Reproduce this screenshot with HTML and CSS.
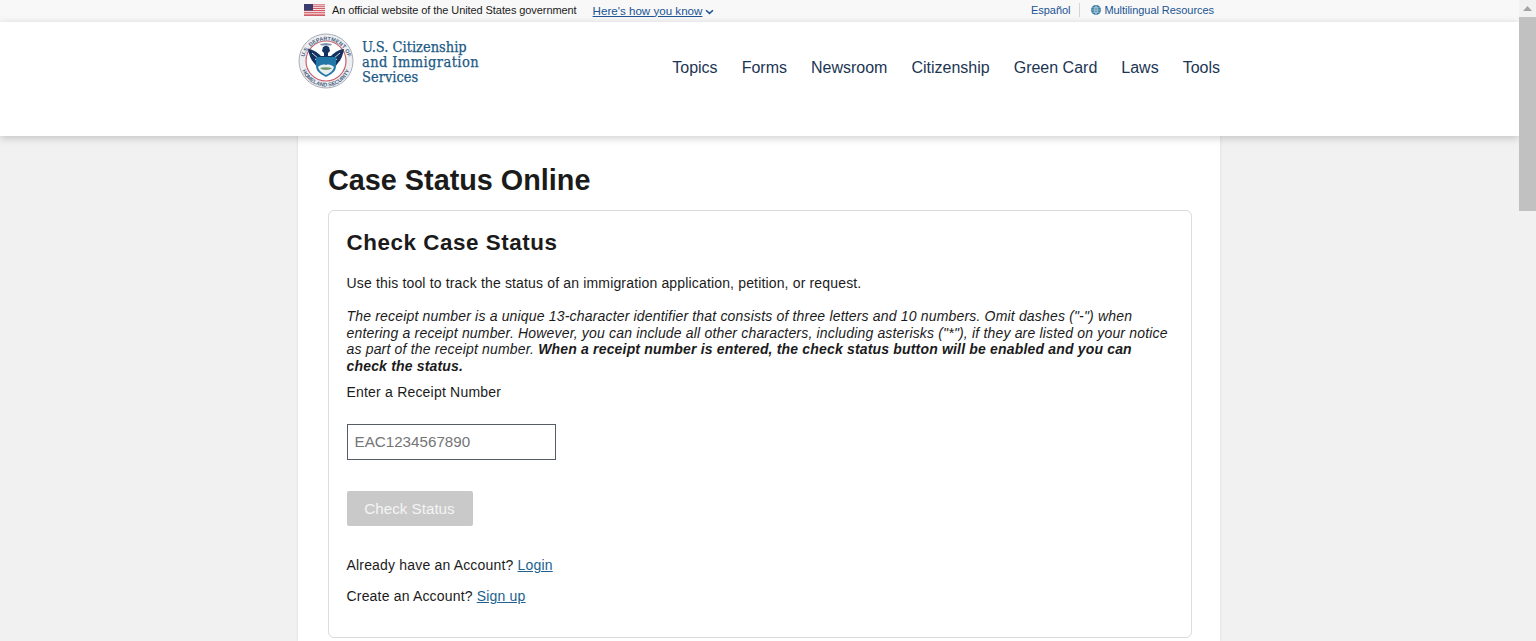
FILE: index.html
```html
<!DOCTYPE html>
<html>
<head>
    <title>Case Status Online</title>
    <link rel="stylesheet" href="styles.css">
</head>
<body>
    <div class="page">
        <div class="banner">
            <div class="banner-inner">
                <svg class="flag" width="21" height="12" viewBox="0 0 21 12">
                    <rect width="21" height="12" fill="#fff"/>
                    <path d="M0 .9h21M0 2.75h21M0 4.6h21M0 6.45h21M0 8.3h21M0 10.15h21M0 11.6h21" stroke="#c8414f" stroke-width=".95"/>
                    <rect width="9" height="6.5" fill="#3c3b6e"/>
                </svg>
                <span class="official">An official website of the United States government</span>
                <a class="know" href="#">Here's how you know</a>
                <svg class="chevron" width="9" height="6" viewBox="0 0 9 6"><path d="M1 1.2l3.5 3.2 3.5-3.2" fill="none" stroke="#205493" stroke-width="1.5"/></svg>
                <div class="lang">
                    <a href="#">Español</a>
                    <span class="lang-sep"></span>
                    <svg width="10" height="10" viewBox="0 0 10 10">
                        <circle cx="5" cy="5" r="4.9" fill="#2a7199"/>
                        <path d="M5 .5v9M.5 5h9M1.2 2.8h7.6M1.2 7.2h7.6M5 .5C2.6 3 2.6 7 5 9.5M5 .5C7.4 3 7.4 7 5 9.5" fill="none" stroke="#d5e6ef" stroke-width=".6"/>
                    </svg>
                    <a href="#">Multilingual Resources</a>
                </div>
            </div>
        </div>

        <header class="header">
            <div class="header-inner">
                <a class="logo" href="#">
                    <svg class="seal" width="56" height="56" viewBox="0 0 56 56">
                        <defs>
                            <path id="sealTop" d="M5.5 30a22.5 22.5 0 0 1 45 0"/>
                            <path id="sealBottom" d="M3 33a25.5 25.5 0 0 0 50 0"/>
                        </defs>
                        <circle cx="28" cy="28" r="27" fill="#eceef1" stroke="#a9adb5" stroke-width="1"/>
                        <circle cx="28" cy="28" r="20" fill="#fff" stroke="#c9606c" stroke-width="1.2"/>
                        <text class="seal-text"><textPath href="#sealTop" startOffset="50%" text-anchor="middle">U.S. DEPARTMENT OF</textPath></text>
                        <text class="seal-text"><textPath href="#sealBottom" startOffset="50%" text-anchor="middle">HOMELAND SECURITY</textPath></text>
                        <!-- wings -->
                        <path d="M10 16c4 0 9 3 13 7h10c4-4 9-7 13-7-1 6-3 11-6 14l-3 4H19l-3-4c-3-3-5-8-6-14z" fill="#14325f"/>
                        <path d="M14 20l7 6M42 20l-7 6M17 26l5 3M39 26l-5 3" stroke="#e8edf2" stroke-width=".9"/>
                        <!-- head -->
                        <path d="M25 14l3-1.5 3 1.5 1 4-2 2v3h-4v-3l-2-2z" fill="#14325f"/>
                        <path d="M22 11l6-1 6 1-1 1.5H23z" fill="#7f93ad"/>
                        <!-- shield -->
                        <path d="M18 24h20v9c0 5-4 8-10 11-6-3-10-6-10-11z" fill="#2377a8"/>
                        <path d="M20 34c2-2 5-3 8-2 3-1 6 0 8 2-1 4-4 6-8 8-4-2-7-4-8-8z" fill="#e9eff1"/>
                        <path d="M22 35c3-1 8-1 12 0-1 1-3 2-6 2s-5-1-6-2z" fill="#6f9a6c"/>
                    </svg>
                    <span class="logo-text">U.S. Citizenship<br><span class="logo-wide">and Immigration</span><br>Services</span>
                </a>
                <nav class="nav">
                    <a href="#">Topics</a>
                    <a href="#">Forms</a>
                    <a href="#">Newsroom</a>
                    <a href="#">Citizenship</a>
                    <a href="#">Green Card</a>
                    <a href="#">Laws</a>
                    <a href="#">Tools</a>
                </nav>
            </div>
        </header>

        <main class="main">
            <h1>Case Status Online</h1>
            <section class="card">
                <h2>Check Case Status</h2>
                <p class="intro">Use this tool to track the status of an immigration application, petition, or request.</p>
                <p class="note">The receipt number is a unique 13-character identifier that consists of three letters and 10 numbers. Omit dashes ("-") when entering a receipt number. However, you can include all other characters, including asterisks ("*"), if they are listed on your notice as part of the receipt number. <b>When a receipt number is entered, the check status button will be enabled and you can check the status.</b></p>
                <label for="receipt">Enter a Receipt Number</label>
                <input type="text" id="receipt" placeholder="EAC1234567890">
                <button type="button" disabled>Check Status</button>
                <p class="account">Already have an Account? <a href="#">Login</a></p>
                <p class="account">Create an Account? <a href="#">Sign up</a></p>
            </section>
        </main>
    </div>

    <div class="scrollbar">
        <div class="scroll-up"><svg width="9" height="5" viewBox="0 0 9 5"><path d="M4.5 0L9 5H0z" fill="#a3a3a3"/></svg></div>
        <div class="scroll-thumb"></div>
    </div>
</body>
</html>
```

FILE: styles.css
```css
html, body {
    height: 100%;
    margin: 0;
    overflow: hidden;
}

body {
    display: flex;
    font-family: "Liberation Sans", Arial, sans-serif;
    color: #1b1b1b;
    background-color: #f1f1f1;
}

.page {
    flex: 1;
    min-width: 0;
    height: 100%;
    overflow: hidden;
}

.banner {
    height: 22px;
    background-color: #f8f8f8;
}

.banner-inner {
    display: flex;
    align-items: center;
    width: 910px;
    height: 20px;
    margin-left: 304px;
    font-size: 11px;
}

.official {
    margin-left: 7px;
    letter-spacing: -0.08px;
}

.know {
    margin-left: 16px;
    font-size: 11.6px;
    color: #205493;
}

.chevron {
    margin-left: 3px;
    margin-top: 3px;
}

.lang {
    display: flex;
    align-items: center;
    margin-left: auto;
    letter-spacing: -0.05px;
}

.lang a {
    color: #205493;
    text-decoration: none;
}

.lang svg {
    margin-right: 3px;
}

.lang-sep {
    width: 1px;
    height: 14px;
    margin: 0 11px 0 9px;
    background-color: #d6d6d6;
}

.header {
    position: relative;
    height: 114px;
    background-color: #fff;
    box-shadow: 0 2px 8px rgba(0, 0, 0, 0.2);
}

.header-inner {
    display: flex;
    align-items: flex-start;
    justify-content: space-between;
    width: 922px;
    margin-left: 298px;
}

.logo {
    display: flex;
    padding-top: 11px;
    text-decoration: none;
}

.seal-text {
    font-family: "Liberation Sans", Arial, sans-serif;
    font-size: 5.4px;
    font-weight: bold;
    fill: #4b5f80;
}

.logo-text {
    margin: 7px 0 0 8px;
    font-family: "DejaVu Serif Condensed", "DejaVu Serif", serif;
    font-stretch: condensed;
    font-size: 14.5px;
    line-height: 15px;
    color: #1d5a84;
    -webkit-text-stroke: 0.25px #1d5a84;
}

.logo-wide {
    letter-spacing: 0.42px;
}

.nav {
    display: flex;
    gap: 24px;
    padding-top: 36px;
}

.nav a {
    font-size: 16px;
    line-height: 19px;
    color: #1c3553;
    text-decoration: none;
}

.main {
    width: 864px;
    height: 505px;
    margin-left: 298px;
    padding: 0 28px 0 30px;
    background-color: #fff;
    box-shadow: 0 0 3px rgba(0, 0, 0, 0.1);
}

h1 {
    margin: 0;
    padding-top: 26px;
    font-size: 28.8px;
    line-height: 36px;
    font-weight: bold;
    letter-spacing: 0;
}

.card {
    height: 426px;
    margin-top: 12px;
    padding: 0 18px 0 17.5px;
    border: 1px solid #dcdcdc;
    border-radius: 6px;
    font-size: 14px;
}

h2 {
    margin: 0;
    padding-top: 19px;
    font-size: 22.4px;
    line-height: 26px;
    letter-spacing: 0.55px;
}

.intro {
    margin: 18px 0 0;
    line-height: 18px;
    letter-spacing: 0.16px;
}

.note {
    margin: 16px 0 0;
    font-style: italic;
    line-height: 16.5px;
    letter-spacing: 0.175px;
}

label {
    display: block;
    margin-top: 9px;
    line-height: 18px;
    letter-spacing: 0.2px;
}

input[type="text"] {
    display: block;
    box-sizing: border-box;
    width: 209px;
    height: 36px;
    margin-top: 23px;
    padding: 0 7px 1px;
    border: 1px solid #565c65;
    font-family: inherit;
    font-size: 15.2px;
}

input::placeholder {
    color: #757575;
    opacity: 1;
}

button {
    display: block;
    width: 126px;
    height: 35px;
    margin-top: 31px;
    border: none;
    border-radius: 2px;
    background-color: #c9c9c9;
    color: #f4f4f4;
    font-family: inherit;
    font-size: 15.2px;
}

.account {
    margin: 13px 0 0;
    line-height: 18px;
    letter-spacing: 0.18px;
}

button + .account {
    margin-top: 30px;
}

.account a {
    color: #205f8e;
}

.scrollbar {
    flex: none;
    width: 17px;
    height: 100%;
    background-color: #f1f1f1;
}

.scroll-up {
    display: flex;
    align-items: center;
    justify-content: center;
    height: 17px;
}

.scroll-thumb {
    height: 194px;
    background-color: #c1c1c1;
}
```
